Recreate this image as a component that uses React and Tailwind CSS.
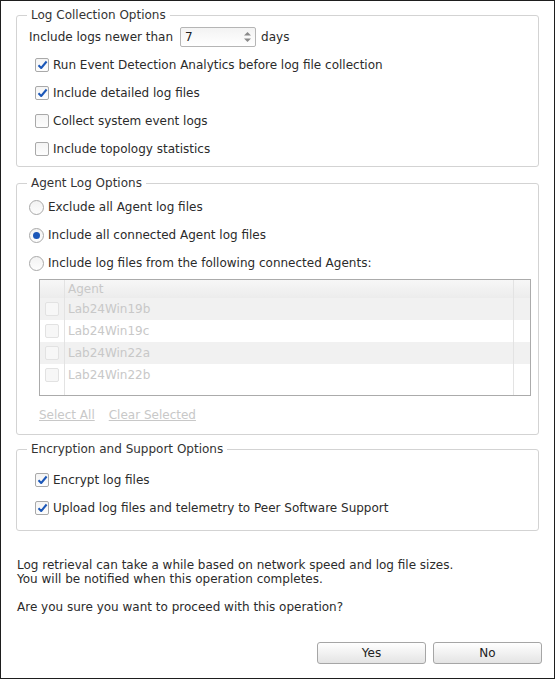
import React, { useState } from 'react';

const font = { fontFamily: '"DejaVu Sans", Verdana, sans-serif' };

const agents = ['Lab24Win19b', 'Lab24Win19c', 'Lab24Win22a', 'Lab24Win22b'];

const CheckBox = ({ checked, disabled }) => (
  <span
    className={`flex h-[14px] w-[14px] shrink-0 items-center justify-center rounded-[2px] border ${
      disabled ? 'border-[#e2e2e2] bg-[#f7f7f7]' : 'border-[#a9a9a9] bg-gradient-to-b from-[#f4f4f4] to-[#fdfdfd]'
    }`}
  >
    {checked && (
      <svg width="11" height="10" viewBox="0 0 11 10">
        <path d="M1.5 5.2 L4.2 8 L9.6 1.5" fill="none" stroke="#1b57b8" strokeWidth="2" strokeLinejoin="round" />
      </svg>
    )}
  </span>
);

const Radio = ({ checked }) => (
  <span className="flex h-[15px] w-[15px] shrink-0 items-center justify-center rounded-full border border-[#a9a9a9] bg-gradient-to-b from-[#f2f2f2] to-[#fdfdfd]">
    {checked && <span className="h-[7px] w-[7px] rounded-full bg-[#1b57b8]" />}
  </span>
);

const CheckRow = ({ checked, label }) => (
  <div className="flex h-[28px] items-center gap-[4px] pl-[18px]">
    <CheckBox checked={checked} />
    <span>{label}</span>
  </div>
);

const RadioRow = ({ checked, label }) => (
  <div className="flex h-[28px] items-center gap-[4px] pl-[12px]">
    <Radio checked={checked} />
    <span>{label}</span>
  </div>
);

const Group = ({ title, className, children }) => (
  <fieldset className={`mx-[15px] rounded-[3px] border border-[#d3d3d3] ${className}`}>
    <legend className="ml-[10px] px-[4px] leading-[16px] text-[#333]">{title}</legend>
    {children}
  </fieldset>
);

export default function App() {
  const [radio] = useState(1);

  return (
    <div
      className="h-[679px] w-[555px] overflow-hidden border border-[#1e1e1e] bg-white pt-[6px] text-[12px] text-[#2b2b2b]"
      style={font}
    >
      <Group title="Log Collection Options" className="pb-[3px]">
        <div className="flex h-[28px] items-center pl-[12px]">
          <span>Include logs newer than</span>
          <div className="ml-[7px] flex h-[20px] w-[76px] items-center justify-between rounded-[2px] border border-[#b5b5b5] bg-gradient-to-b from-[#f3f3f3] to-white pl-[4px] pr-[3px]">
            <span className="text-[#222]">7</span>
            <svg width="9" height="14" viewBox="0 0 9 14">
              <path d="M1 5.5 L4.5 2 L8 5.5 Z" fill="#8a8a8a" />
              <path d="M1 8.5 L4.5 12 L8 8.5 Z" fill="#8a8a8a" />
            </svg>
          </div>
          <span className="ml-[5px]">days</span>
        </div>
        <CheckRow checked label="Run Event Detection Analytics before log file collection" />
        <CheckRow checked label="Include detailed log files" />
        <CheckRow label="Collect system event logs" />
        <CheckRow label="Include topology statistics" />
      </Group>

      <Group title="Agent Log Options" className="mt-[8px] pb-[11px]">
        <div className="pt-[2px]">
          <RadioRow checked={radio === 0} label="Exclude all Agent log files" />
          <RadioRow checked={radio === 1} label="Include all connected Agent log files" />
          <RadioRow checked={radio === 2} label="Include log files from the following connected Agents:" />
        </div>
        <div className="ml-[22px] mr-[7px] mt-[2px] h-[117px] border border-[#ababab] text-[#c8c8c8]">
          <div className="grid h-full grid-cols-[25px_1fr_17px] grid-rows-[18px_22px_22px_22px_22px_1fr]">
            <div className="border-r border-[#e3e3e3] bg-gradient-to-b from-[#f7f7f7] to-[#ececec]" />
            <div className="flex items-center bg-gradient-to-b from-[#f7f7f7] to-[#ececec] pl-[3px]">Agent</div>
            <div className="border-l border-[#e3e3e3] bg-gradient-to-b from-[#f7f7f7] to-[#ececec]" />
            {agents.map((a, i) => (
              <React.Fragment key={a}>
                <div className={`flex items-center justify-center border-r border-[#e3e3e3] ${i % 2 === 0 ? 'bg-[#f1f1f1]' : 'bg-white'}`}>
                  <CheckBox disabled />
                </div>
                <div className={`flex items-center pl-[3px] ${i % 2 === 0 ? 'bg-[#f1f1f1]' : 'bg-white'}`}>{a}</div>
                <div className={`border-l border-[#e3e3e3] ${i % 2 === 0 ? 'bg-[#f1f1f1]' : 'bg-white'}`} />
              </React.Fragment>
            ))}
            <div className="border-r border-[#e3e3e3]" />
            <div />
            <div className="border-l border-[#e3e3e3]" />
          </div>
        </div>
        <div className="mx-[22px] mt-[11px] flex h-[16px] items-center gap-[14px] text-[#c8c8c8]">
          <span className="underline">Select All</span>
          <span className="underline">Clear Selected</span>
        </div>
      </Group>

      <Group title="Encryption and Support Options" className="mt-[6px] pb-[8px]">
        <div className="pt-[9px]">
          <CheckRow checked label="Encrypt log files" />
          <CheckRow checked label="Upload log files and telemetry to Peer Software Support" />
        </div>
      </Group>

      <div className="mt-[27px] px-[16px] leading-[14px]">
        <p>Log retrieval can take a while based on network speed and log file sizes.</p>
        <p>You will be notified when this operation completes.</p>
        <p className="mt-[14px]">Are you sure you want to proceed with this operation?</p>
      </div>

      <div className="mt-[28px] flex justify-end gap-[7px] pr-[12px]">
        <button className="h-[22px] w-[109px] rounded-[3px] border border-[#a6a6a6] bg-gradient-to-b from-white to-[#e4e4e4] text-[#222]">
          Yes
        </button>
        <button className="h-[22px] w-[109px] rounded-[3px] border border-[#a6a6a6] bg-gradient-to-b from-white to-[#e4e4e4] text-[#222]">
          No
        </button>
      </div>
    </div>
  );
}
